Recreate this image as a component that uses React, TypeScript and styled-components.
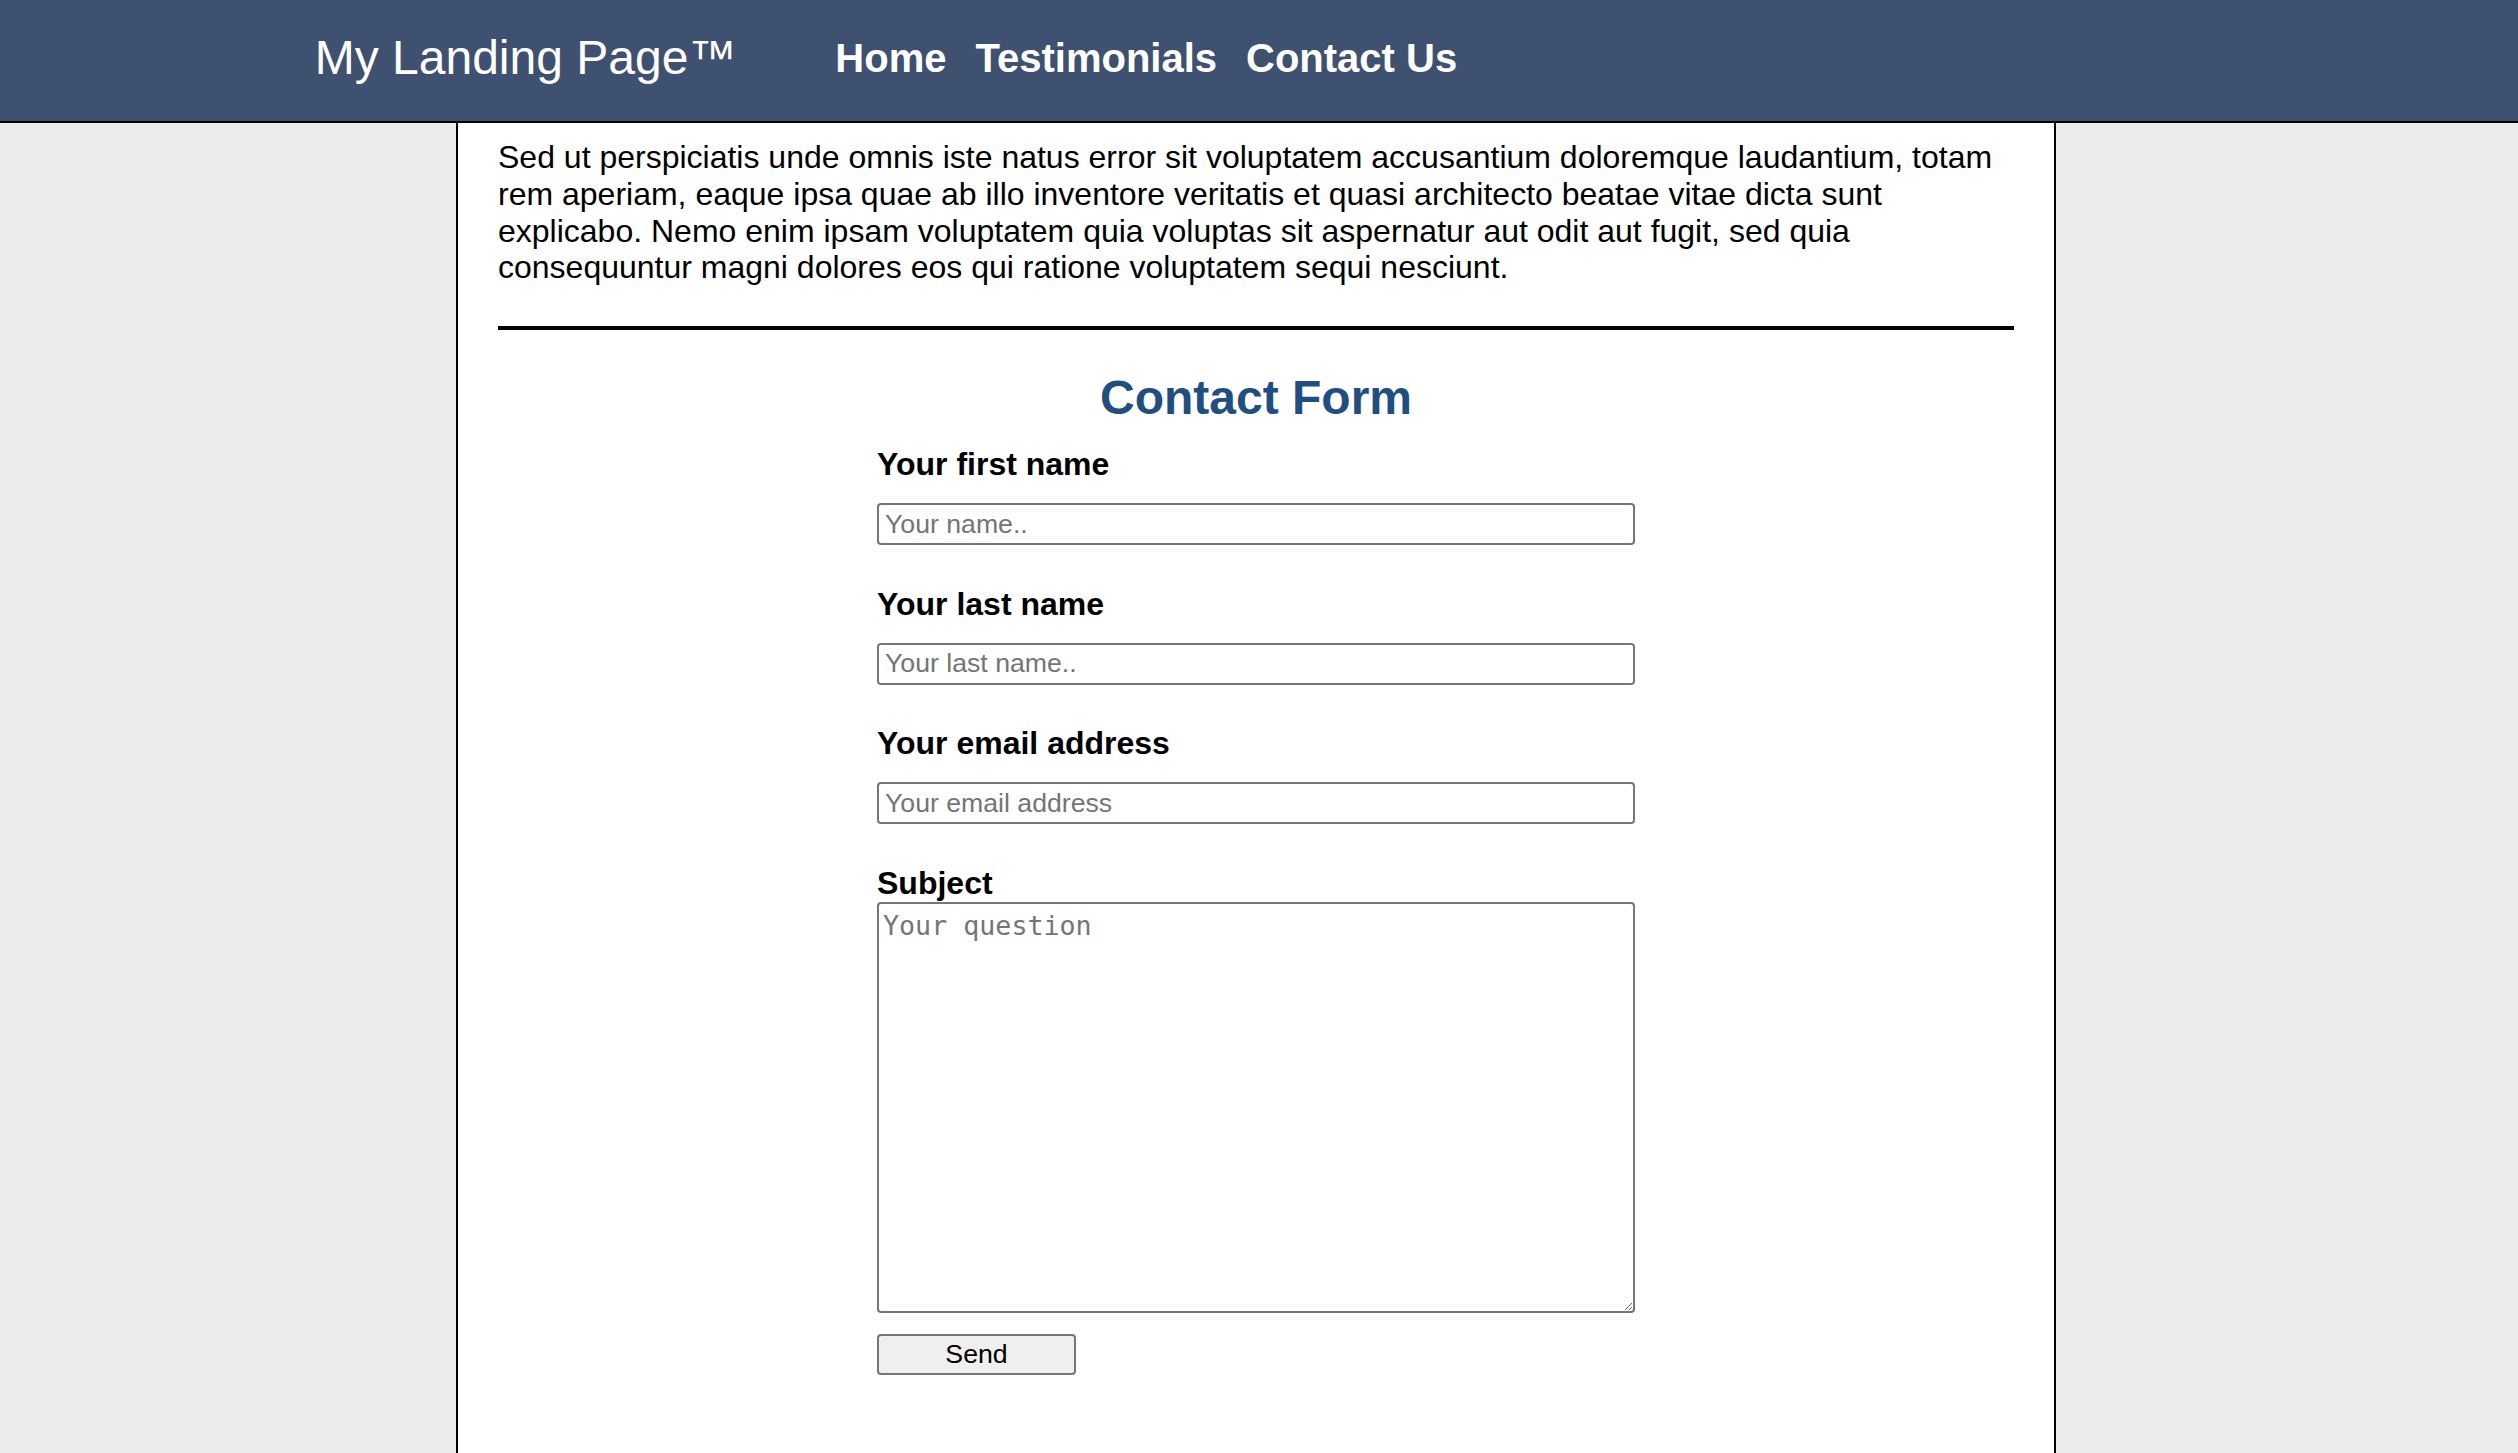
import React from "react";
import styled, { createGlobalStyle } from "styled-components";

const GlobalStyle = createGlobalStyle`
  html, body {
    margin: 0;
    padding: 0;
    background: #ebebeb;
    font-family: "Liberation Sans", Arial, Helvetica, sans-serif;
    color: #000;
  }
  * { box-sizing: border-box; }
`;

const Page = styled.div`
  display: flex;
  flex-direction: column;
  min-height: 100vh;
`;

const Header = styled.header`
  height: 123px;
  background: #3e5170;
  border-bottom: 2px solid #000;
  display: flex;
  align-items: center;
  padding-left: 12.5%;
`;

const Logo = styled.div`
  color: #fff;
  font-size: 48px;
  line-height: 55px;
  margin-top: -6px;
`;

const Nav = styled.nav`
  display: flex;
  gap: 29px;
  margin: -6px 0 0 99px;
`;

const NavLink = styled.a`
  color: #fff;
  font-weight: 700;
  font-size: 40px;
  line-height: 46px;
  text-decoration: none;
  cursor: pointer;
`;

const Main = styled.main`
  flex: 1;
  width: 1600px;
  margin-left: calc(50% - 803px);
  background: #fff;
  border-left: 2px solid #000;
  border-right: 2px solid #000;
  padding: 16px 40px 40px;
`;

const Intro = styled.p`
  margin: 0;
  font-size: 32px;
  line-height: 36.8px;
`;

const Rule = styled.hr`
  margin: 40px 0 0;
  border: none;
  height: 4px;
  background: #000;
`;

const Form = styled.form`
  width: 50%;
  margin: 0 auto;
  display: flex;
  flex-direction: column;
  align-items: flex-start;
`;

const Title = styled.h2`
  align-self: stretch;
  margin: 40px -50% 21px;
  text-align: center;
  color: #1f4f82;
  font-size: 48px;
  line-height: 55px;
  font-weight: 700;
`;

const Label = styled.label`
  display: block;
  font-size: 32px;
  line-height: 37px;
  font-weight: 700;
`;

const TextInput = styled.input`
  width: 100%;
  height: 42px;
  margin: 20px 0 40.5px;
  padding: 0 6px;
  border: 2px solid #767676;
  border-radius: 4px;
  font-family: "Liberation Sans", Arial, sans-serif;
  font-size: 26.67px;
  color: #000;
  background: #fff;
  &::placeholder {
    color: #757575;
  }
`;

const Question = styled.textarea`
  width: 100%;
  height: 411px;
  margin: 0;
  padding: 6px 4px 2px;
  border: 2px solid #767676;
  border-radius: 4px;
  font-family: "DejaVu Sans Mono", "Liberation Mono", monospace;
  font-size: 26.67px;
  line-height: 31px;
  color: #000;
  background: #fff;
  &::placeholder {
    color: #757575;
  }
`;

const SendButton = styled.button`
  margin-top: 21px;
  width: 199px;
  height: 41px;
  background: #efefef;
  border: 2px solid #767676;
  border-radius: 4px;
  font-family: "Liberation Sans", Arial, sans-serif;
  font-size: 26.67px;
  color: #000;
  padding: 0;
  cursor: pointer;
`;

export default function App() {
  return (
    <>
      <GlobalStyle />
      <Page>
        <Header>
          <Logo>My Landing Page™</Logo>
          <Nav>
            <NavLink>Home</NavLink>
            <NavLink>Testimonials</NavLink>
            <NavLink>Contact Us</NavLink>
          </Nav>
        </Header>
        <Main>
          <Intro>
            Sed ut perspiciatis unde omnis iste natus error sit voluptatem accusantium doloremque
            laudantium, totam rem aperiam, eaque ipsa quae ab illo inventore veritatis et quasi
            architecto beatae vitae dicta sunt explicabo. Nemo enim ipsam voluptatem quia voluptas
            sit aspernatur aut odit aut fugit, sed quia consequuntur magni dolores eos qui ratione
            voluptatem sequi nesciunt.
          </Intro>
          <Rule />
          <Form onSubmit={(e) => e.preventDefault()}>
            <Title>Contact Form</Title>
            <Label htmlFor="fname">Your first name</Label>
            <TextInput id="fname" type="text" placeholder="Your name.." />
            <Label htmlFor="lname">Your last name</Label>
            <TextInput id="lname" type="text" placeholder="Your last name.." />
            <Label htmlFor="email">Your email address</Label>
            <TextInput id="email" type="text" placeholder="Your email address" />
            <Label htmlFor="subject">Subject</Label>
            <Question id="subject" placeholder="Your question" />
            <SendButton type="submit">Send</SendButton>
          </Form>
        </Main>
      </Page>
    </>
  );
}
